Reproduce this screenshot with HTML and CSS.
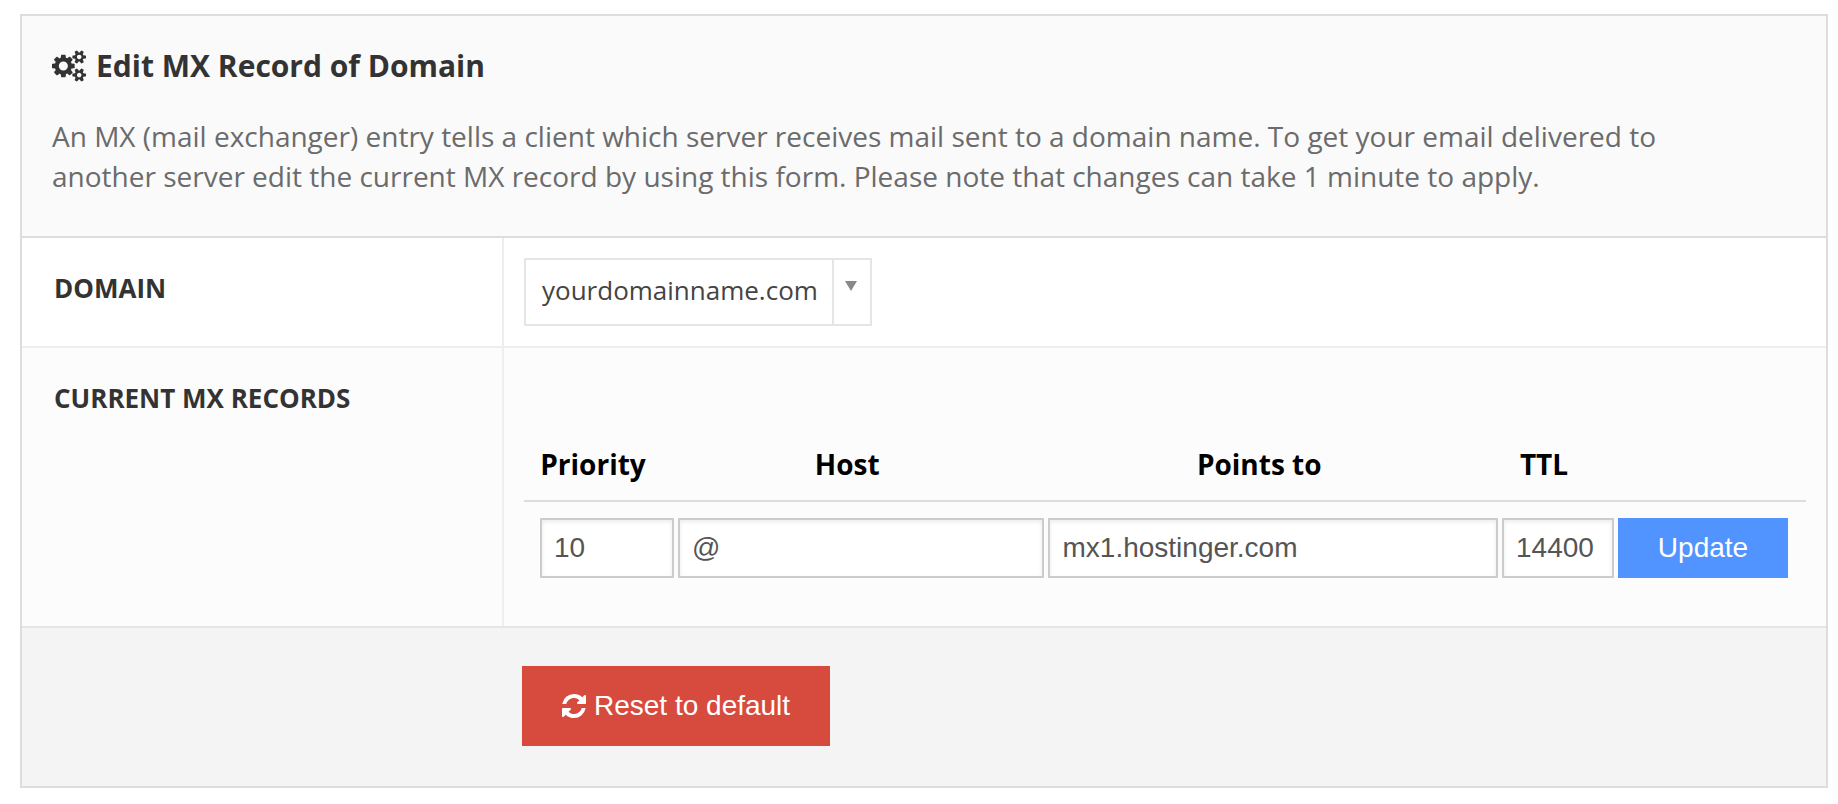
FILE: index.html
```html
<!DOCTYPE html>
<html lang="en">
<head>
<meta charset="utf-8">
<meta name="viewport" content="width=device-width, initial-scale=1">
<title>Edit MX Record of Domain</title>
<link rel="stylesheet" href="styles.css">
</head>
<body>
<main class="panel">
  <header class="panel-head">
    <h1 class="title">
      <svg class="icon-cogs" viewBox="0 0 1920 1792" aria-hidden="true"><path d="M896 896q0-106-75-181t-181-75-181 75-75 181 75 181 181 75 181-75 75-181zm768 512q0-52-38-90t-90-38-90 38-38 90q0 53 37.500 90.500t90.500 37.500 90.500-37.500 37.500-90.500zm0-1024q0-52-38-90t-90-38-90 38-38 90q0 53 37.500 90.500T1536 512t90.500-37.500T1664 384zm-384 421v185q0 10-7 19.500t-16 10.500l-155 24q-11 35-32 76 34 48 90 115 7 11 7 20 0 12-7 19-23 30-82.500 89.500T999 1423q-11 0-21-7l-115-90q-37 19-77 31-11 108-23 155-7 24-30 24H547q-11 0-20-7.500t-10-17.500l-23-153q-34-10-75-31l-118 89q-7 7-20 7-11 0-21-8-144-133-144-160 0-9 7-19 10-14 41-53t47-61q-23-44-35-82l-152-24q-10-1-17-9.500T0 987V802q0-10 7-19.500T23 772l155-24q11-35 32-76-34-48-90-115-7-11-7-20 0-12 7-20 22-30 82-89t79-59q11 0 21 7l115 90q34-18 77-32 11-108 23-154 7-24 30-24h186q11 0 20 7.500t10 17.500l23 153q34 10 75 31l118-89q8-7 20-7 11 0 21 8 144 133 144 160 0 8-7 19-12 16-42 54t-45 60q23 48 34 82l152 23q10 2 17 10.500t7 19.500zm640 533v140q0 16-149 31-12 27-30 52 51 113 51 138 0 4-4 7-122 71-124 71-8 0-46-47t-52-68q-20 2-30 2t-30-2q-14 21-52 68t-46 47q-2 0-124-71-4-3-4-7 0-25 51-138-18-25-30-52-149-15-149-31v-140q0-16 149-31 13-29 30-52-51-113-51-138 0-4 4-7 4-2 35-20t59-34 30-16q8 0 46 46.500t52 67.500q20-2 30-2t30 2q51-71 92-112l6-2q4 0 124 70 4 3 4 7 0 25-51 138 17 23 30 52 149 15 149 31zm0-1024v140q0 16-149 31-12 27-30 52 51 113 51 138 0 4-4 7-122 71-124 71-8 0-46-47t-52-68q-20 2-30 2t-30-2q-14 21-52 68t-46 47q-2 0-124-71-4-3-4-7 0-25 51-138-18-25-30-52-149-15-149-31V314q0-16 149-31 13-29 30-52-51-113-51-138 0-4 4-7 4-2 35-20t59-34 30-16q8 0 46 46.500t52 67.500q20-2 30-2t30 2q51-71 92-112l6-2q4 0 124 70 4 3 4 7 0 25-51 138 17 23 30 52 149 15 149 31z"/></svg>
      Edit MX Record of Domain
    </h1>
    <p class="intro">An MX (mail exchanger) entry tells a client which server receives mail sent to a domain name. To get your email delivered to another server edit the current MX record by using this form. Please note that changes can take 1 minute to apply.</p>
  </header>

  <form class="mx-form">
    <div class="row">
      <label class="row-label" for="domain">DOMAIN</label>
      <div class="row-body">
        <span class="select-box">
          <select class="select" id="domain" name="domain">
            <option>yourdomainname.com</option>
          </select>
        </span>
      </div>
    </div>

    <div class="row row-alt">
      <h2 class="row-label" id="records-label">CURRENT MX RECORDS</h2>
      <div class="row-body row-body-records">
        <table class="records" aria-labelledby="records-label">
          <colgroup>
            <col class="col-priority">
            <col class="col-host">
            <col class="col-target">
            <col class="col-ttl">
            <col class="col-action">
          </colgroup>
          <thead>
            <tr>
              <th scope="col" id="h-priority">Priority</th>
              <th scope="col" id="h-host">Host</th>
              <th scope="col" id="h-target">Points to</th>
              <th scope="col" id="h-ttl">TTL</th>
              <td></td>
            </tr>
          </thead>
          <tbody>
            <tr>
              <td><input class="field" type="text" name="priority" value="10" aria-labelledby="h-priority"></td>
              <td><input class="field" type="text" name="host" value="@" aria-labelledby="h-host"></td>
              <td><input class="field" type="text" name="target" value="mx1.hostinger.com" aria-labelledby="h-target"></td>
              <td><input class="field" type="text" name="ttl" value="14400" aria-labelledby="h-ttl"></td>
              <td><button class="btn btn-update" type="button">Update</button></td>
            </tr>
          </tbody>
        </table>
      </div>
    </div>

    <div class="form-foot">
      <button class="btn btn-reset" type="button">
        <svg class="icon-refresh" viewBox="0 0 1536 1536" aria-hidden="true"><path d="M1511 928q0 5-1 7-64 268-268 434.500T764 1536q-146 0-282.500-55T238 1324l-129 129q-19 19-45 19t-45-19-19-45V960q0-26 19-45t45-19h448q26 0 45 19t19 45-19 45l-137 137q71 66 161 102t187 36q134 0 250-65t186-179q11-17 53-117 8-23 30-23h192q13 0 22.500 9.500t9.500 22.500zm25-800v448q0 26-19 45t-45 19h-448q-26 0-45-19t-19-45 19-45l138-138Q969 256 768 256q-134 0-250 65T332 500q-11 17-53 117-8 23-30 23H50q-13 0-22.500-9.500T18 608v-7q65-268 270-434.500T768 0q146 0 284 55.500T1297 212l130-129q19-19 45-19t45 19 19 45z"/></svg>
        Reset to default
      </button>
    </div>
  </form>
</main>
</body>
</html>
```

FILE: styles.css
```css
* {
  box-sizing: border-box;
}

body {
  margin: 0;
  padding: 14px 10px 16px 20px;
  background: #fff;
  color: #333;
  font-family: "Open Sans", "Noto Sans", sans-serif;
}

.panel {
  border: 2px solid #ddd;
}

/* Header */

.panel-head {
  padding: 28px 140px 40px 30px;
  background: #fafafa;
  border-bottom: 2px solid #ddd;
}

.title {
  display: flex;
  align-items: center;
  gap: 10px;
  margin: 0 0 28px;
  font-size: 30px;
  font-weight: 700;
  line-height: 44px;
}

.icon-cogs {
  width: 34px;
  height: 32px;
  fill: #333;
}

.intro {
  margin: 0;
  color: #6b6b6b;
  font-size: 28px;
  line-height: 40px;
}

/* Form rows */

.row {
  display: grid;
  grid-template-columns: 482px minmax(0, 1fr);
  border-bottom: 2px solid #eee;
}

.row-alt {
  background: #fcfcfc;
  border-bottom-color: #e5e5e5;
}

.row-label {
  margin: 0;
  padding: 30px 32px 0;
  border-right: 2px solid #eee;
  font-size: 26px;
  font-weight: 700;
  line-height: 40px;
}

.row-body {
  padding: 20px;
}

.row-body-records {
  padding-top: 86px;
  padding-bottom: 48px;
}

/* Domain drop-down */

.select-box {
  display: inline-block;
  position: relative;
  vertical-align: top;
  border: 2px solid #e5e5e5;
  background: #fff;
}

.select {
  display: block;
  appearance: none;
  width: 344px;
  height: 64px;
  padding: 0 52px 4px 16px;
  border: 0;
  background: transparent;
  color: #444;
  font-family: inherit;
  font-size: 26px;
}

.select-box::before {
  content: "";
  position: absolute;
  top: 0;
  right: 36px;
  bottom: 0;
  border-left: 2px solid #e5e5e5;
}

.select-box::after {
  content: "";
  position: absolute;
  top: 21px;
  right: 13px;
  border: 6px solid transparent;
  border-top: 10px solid #888;
  border-bottom: 0;
  pointer-events: none;
}

/* MX records */

.records {
  width: 100%;
  border-collapse: collapse;
  table-layout: fixed;
}

.col-priority {
  width: 152px;
}

.col-host {
  width: 28.9%;
}

.col-ttl {
  width: 116px;
}

.col-action {
  width: 190px;
}

.records thead th,
.records thead td {
  padding: 10px 28px 16px 0;
  border-bottom: 2px solid #ddd;
  color: #000;
  font-size: 28px;
  font-weight: 700;
  line-height: 40px;
  text-align: center;
  white-space: nowrap;
}

.records thead th:first-child {
  padding-right: 14px;
}

.records tbody td {
  padding: 16px 2px 0;
}

.records tbody td:first-child {
  padding-left: 16px;
}

.records tbody td:last-child {
  padding-right: 18px;
}

.field {
  display: block;
  width: 100%;
  height: 60px;
  padding: 0 12px;
  border: 2px solid #ccc;
  border-radius: 0;
  background: #fff;
  box-shadow: inset 0 2px 4px rgba(0, 0, 0, 0.08);
  color: #555;
  font-family: "Liberation Sans", Arial, sans-serif;
  font-size: 28px;
}

/* Buttons */

.btn {
  border: 0;
  color: #fff;
  font-family: "Liberation Sans", Arial, sans-serif;
  font-size: 28px;
}

.btn-update {
  display: block;
  width: 100%;
  height: 60px;
  padding: 0;
  background: #5294ff;
}

.form-foot {
  padding: 38px 20px 40px 500px;
  background: #f4f4f4;
}

.btn-reset {
  display: flex;
  align-items: center;
  gap: 8px;
  height: 80px;
  padding: 0 40px;
  background: #d64b3e;
}

.icon-refresh {
  width: 24px;
  height: 24px;
  fill: #fff;
}
```
